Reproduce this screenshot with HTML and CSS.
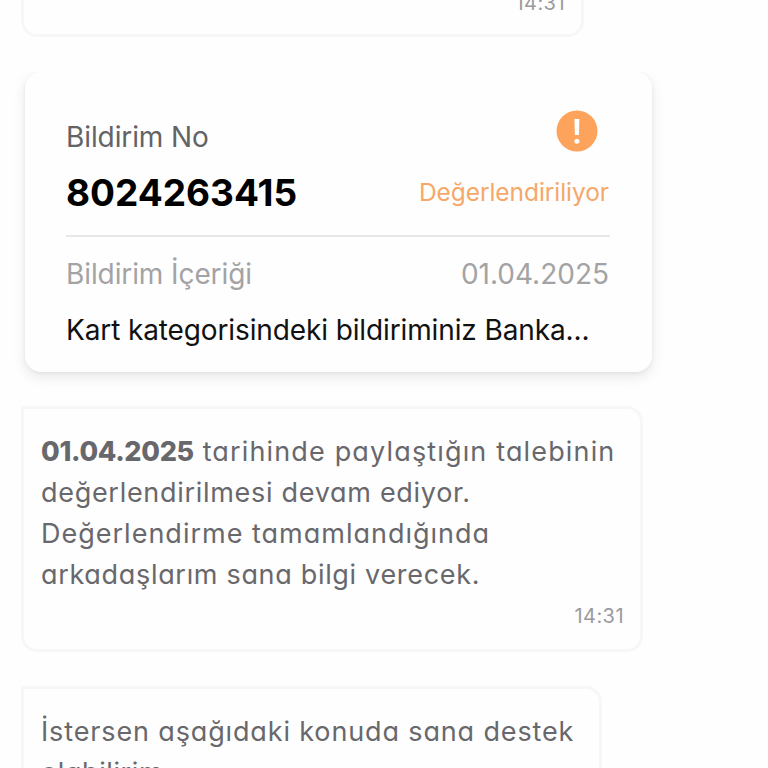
FILE: index.html
```html
<!DOCTYPE html>
<html lang="tr">
<head>
  <meta charset="UTF-8">
  <title>Destek</title>
  <meta name="viewport" content="width=device-width, initial-scale=1.0">
  <link rel="stylesheet" href="styles.css">
</head>
<body>

<main class="chat">

  <div class="bubble bubble-first">
    <span class="time">14:31</span>
  </div>

  <div class="ticket-card">
    <div class="row row-top">
      <span class="label">Bildirim No</span>
      <svg class="alert-icon" viewBox="0 0 42 42">
        <circle cx="21" cy="21" r="20.5" fill="#fda35c"/>
        <path d="M18.4 9h5l-.5 16h-4z" fill="#fff"/>
        <circle cx="20.9" cy="31.2" r="2.5" fill="#fff"/>
      </svg>
    </div>
    <div class="row row-number">
      <span class="ticket-no">8024263415</span>
      <span class="status">Değerlendiriliyor</span>
    </div>
    <div class="row row-content">
      <span class="content-label">Bildirim İçeriği</span>
      <span class="date">01.04.2025</span>
    </div>
    <p class="summary">Kart kategorisindeki bildiriminiz Banka...</p>
  </div>

  <div class="bubble bubble-info">
    <p class="message">
      <span class="line line-1"><b>01.04.2025</b> tarihinde paylaştığın talebinin</span>
      <span class="line line-2">değerlendirilmesi devam ediyor.</span>
      <span class="line line-3">Değerlendirme tamamlandığında</span>
      <span class="line line-4">arkadaşlarım sana bilgi verecek.</span>
    </p>
    <span class="time">14:31</span>
  </div>

  <div class="bubble bubble-next">
    <p class="message">
      <span class="line line-5">İstersen aşağıdaki konuda sana destek</span>
      <span class="line line-6">olabilirim.</span>
    </p>
  </div>

</main>

</body>
</html>
```

FILE: styles.css
```css
* {
  box-sizing: border-box;
}
body {
  margin: 0;
  background: #fefefe;
  font-family: Inter, "Liberation Sans", sans-serif;
}
.chat {
  height: 768px;
  padding-left: 21px;
  overflow: hidden;
  display: flex;
  flex-direction: column;
  align-items: flex-start;
}
.bubble {
  flex: none;
  background: #fefefe;
  border: 3px solid #f7f7f7;
  border-radius: 0 16px 16px 16px;
}
.bubble-first {
  width: 563px;
  height: 58px;
  margin-top: -21px;
  padding: 8px 16px 0 0;
  text-align: right;
}
.time {
  display: block;
  font-size: 20px;
  line-height: 26px;
  letter-spacing: 0.45px;
  color: #9a9a9c;
  text-align: right;
}
.ticket-card {
  flex: none;
  width: 627px;
  height: 300px;
  margin: 35px 0 0 4px;
  padding: 38px 43px 0 41px;
  background: #fefefe;
  border-radius: 16px;
  box-shadow: 0 5px 14px rgba(0, 0, 0, 0.09), 0 1px 4px rgba(0, 0, 0, 0.06);
  clip-path: inset(0 -20px -30px -20px);
}
.row {
  display: flex;
  justify-content: space-between;
  white-space: nowrap;
}
.row-top {
  height: 52px;
}
.label {
  font-size: 28px;
  line-height: 54px;
  letter-spacing: -0.1px;
  color: #636366;
}
.alert-icon {
  width: 42px;
  height: 42px;
  margin-right: 11px;
}
.row-number {
  height: 75px;
  margin-right: -1px;
  border-bottom: 2px solid #e8e8e8;
}
.ticket-no {
  font-size: 37px;
  font-weight: 700;
  line-height: 61px;
  color: #000;
}
.status {
  padding-right: 1px;
  font-size: 24.5px;
  line-height: 61px;
  letter-spacing: -0.06px;
  color: #f5a869;
}
.row-content {
  height: 65px;
  font-size: 28px;
  line-height: 75px;
  color: #a3a3a6;
}
.content-label {
  letter-spacing: -0.1px;
}
.summary {
  margin: 0;
  font-size: 28px;
  line-height: 56px;
  letter-spacing: -0.12px;
  color: #111;
  white-space: nowrap;
}
.bubble-info {
  width: 622px;
  height: 246px;
  margin-top: 34px;
  padding: 22px 16px 0 17px;
}
.message {
  margin: 0;
  font-size: 27px;
  line-height: 41px;
  color: #68686c;
  font-feature-settings: "cv11";
  white-space: nowrap;
}
.line {
  display: block;
}
.line-1 {
  letter-spacing: 1.15px;
}
.line-2 {
  letter-spacing: 0.7px;
}
.line-3 {
  letter-spacing: 1px;
}
.line-4 {
  letter-spacing: 0.68px;
}
.line-5 {
  letter-spacing: 0.86px;
}
.line-6 {
  letter-spacing: 0.6px;
}
.message b {
  font-weight: 800;
  letter-spacing: -0.3px;
}
.bubble-info .time {
  margin-top: 8px;
}
.bubble-next {
  width: 581px;
  height: 200px;
  margin-top: 34px;
  padding: 22px 16px 0 17px;
}
```
